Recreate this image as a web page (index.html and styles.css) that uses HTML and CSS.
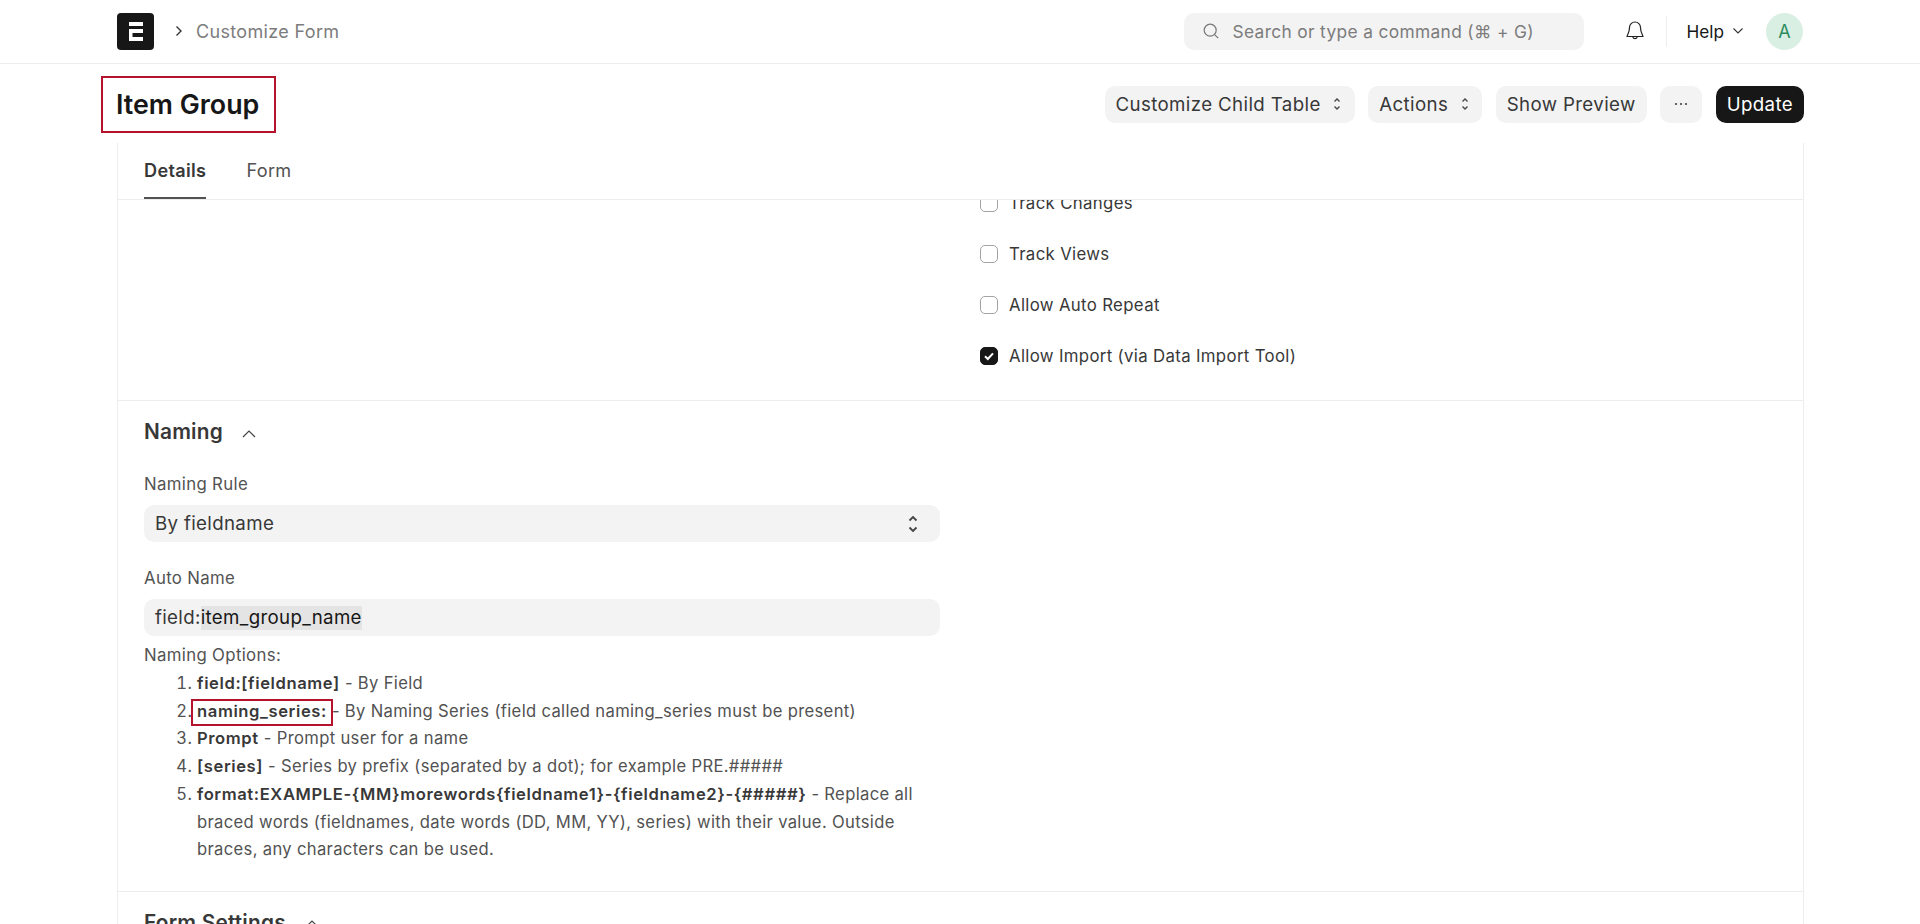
FILE: index.html
```html
<!DOCTYPE html>
<html lang="en">
<head>
<meta charset="utf-8">
<title>Customize Form</title>
<link rel="stylesheet" href="styles.css">
</head>
<body>
<header class="navbar">
  <div class="nav-left">
    <svg class="logo" viewBox="0 0 37 37" aria-hidden="true"><rect width="37" height="37" rx="4" fill="#171717"/><path d="M12 9h14v4H12zM12 16h14v4H15.500v4H26v4H12z" fill="#fff"/></svg>
    <svg class="crumb-chevron" viewBox="0 0 10 14" aria-hidden="true"><path d="M2.500 2.500 7 7l-4.500 4.500" fill="none" stroke="#333" stroke-width="1.400"/></svg>
    <span class="crumb">Customize Form</span>
  </div>
  <div class="nav-right">
    <div class="search">
      <svg class="search-icon" viewBox="0 0 18 18" aria-hidden="true"><circle cx="8.200" cy="8.200" r="6" fill="none" stroke="#777" stroke-width="1.200"/><path d="m12.600 12.600 3.600 3.600" stroke="#777" stroke-width="1.200" fill="none"/></svg>
      <span>Search or type a command (⌘ + G)</span>
    </div>
    <svg class="bell" viewBox="0 0 20 22" aria-hidden="true"><path d="M10 2a5.500 5.500 0 0 0-5.500 5.500c0 5-2 7-2.500 9h16c-.5-2-2.500-4-2.500-9A5.500 5.500 0 0 0 10 2Z" fill="none" stroke="#222" stroke-width="1.200" stroke-linejoin="round"/><path d="M7.800 17a2.300 2.300 0 0 0 4.400 0" fill="none" stroke="#222" stroke-width="1.200"/></svg>
    <div class="nav-divider"></div>
    <div class="help">Help
      <svg class="help-chevron" viewBox="0 0 12 8" aria-hidden="true"><path d="m1.500 1.500 4.500 4.500 4.500-4.500" fill="none" stroke="#333" stroke-width="1.100"/></svg>
    </div>
    <div class="avatar">A</div>
  </div>
</header>

<section class="page-head">
  <h1 class="title"><span class="marked">Item Group</span></h1>
  <div class="actions">
    <button class="btn">Customize Child Table
      <svg class="updown" viewBox="0 0 8 14" aria-hidden="true"><path d="m1.500 4.500 2.500-2.500 2.500 2.500M1.500 9.500l2.500 2.500 2.500-2.500" fill="none" stroke="#444" stroke-width="1.300"/></svg>
    </button>
    <button class="btn">Actions
      <svg class="updown" viewBox="0 0 8 14" aria-hidden="true"><path d="m1.500 4.500 2.500-2.500 2.500 2.500M1.500 9.500l2.500 2.500 2.500-2.500" fill="none" stroke="#444" stroke-width="1.300"/></svg>
    </button>
    <button class="btn">Show Preview</button>
    <button class="btn btn-more" aria-label="More">
      <svg class="dots" viewBox="0 0 14 4" aria-hidden="true"><circle cx="2" cy="2" r="1.100" fill="#444"/><circle cx="7" cy="2" r="1.100" fill="#444"/><circle cx="12" cy="2" r="1.100" fill="#444"/></svg>
    </button>
    <button class="btn btn-primary">Update</button>
  </div>
</section>

<main class="card">
  <nav class="tabs">
    <a class="tab tab-active">Details</a>
    <a class="tab">Form</a>
  </nav>
  <div class="viewport">
    <section class="section section-checks">
      <div class="col"></div>
      <div class="col checks">
        <label class="check"><span class="box"></span>Track Changes</label>
        <label class="check"><span class="box"></span>Track Views</label>
        <label class="check"><span class="box"></span>Allow Auto Repeat</label>
        <label class="check"><span class="box box-on"><svg viewBox="0 0 18 18" aria-hidden="true"><path d="m5 9.300 2.800 2.700L13 6.300" fill="none" stroke="#fff" stroke-width="2"/></svg></span>Allow Import (via Data Import Tool)</label>
      </div>
    </section>
    <section class="section section-naming">
      <h2 class="section-title">Naming
        <svg class="collapse" viewBox="0 0 16 10" aria-hidden="true"><path d="m2 8 6-6 6 6" fill="none" stroke="#444" stroke-width="1.200"/></svg>
      </h2>
      <div class="field-col">
        <div class="label">Naming Rule</div>
        <div class="control control-select">By fieldname
          <svg class="updown updown-lg" viewBox="0 0 10 18" aria-hidden="true"><path d="m1.500 5.500 3.500-3.500 3.500 3.500M1.500 12.500l3.500 3.500 3.500-3.500" fill="none" stroke="#444" stroke-width="1.800"/></svg>
        </div>
        <div class="label label-next">Auto Name</div>
        <div class="control">field:<span class="selected">item_group_name</span></div>
        <div class="help-text">Naming Options:</div>
        <ol class="options">
          <li><b>field:[fieldname]</b> - By Field</li>
          <li><b class="marked-small">naming_series:</b> - By Naming Series (field called naming_series must be present)</li>
          <li><b>Prompt</b> - Prompt user for a name</li>
          <li><b>[series]</b> - Series by prefix (separated by a dot); for example PRE.#####</li>
          <li><b>format:EXAMPLE-{MM}morewords{fieldname1}-{fieldname2}-{#####}</b> - Replace all braced words (fieldnames, date words (DD, MM, YY), series) with their value. Outside braces, any characters can be used.</li>
        </ol>
      </div>
    </section>
    <section class="section section-form">
      <h2 class="section-title">Form Settings
        <svg class="collapse" viewBox="0 0 16 10" aria-hidden="true"><path d="m2 8 6-6 6 6" fill="none" stroke="#444" stroke-width="1.200"/></svg>
      </h2>
    </section>
  </div>
</main>
</body>
</html>
```
FILE: styles.css
```css
* { box-sizing: border-box; }
html, body { height: 100%; }
body {
  margin: 0;
  height: 924px;
  overflow: hidden;
  display: flex;
  flex-direction: column;
  background: #fff;
  color: #383838;
  font-family: Inter, "Liberation Sans", sans-serif;
  font-size: 16.800px;
  letter-spacing: 0.02em;
}

.navbar {
  flex: none;
  height: 64px;
  padding: 0 117px 1px 117px;
  border-bottom: 1px solid #ededed;
  display: flex;
  align-items: center;
  justify-content: space-between;
}
.nav-left, .nav-right { display: flex; align-items: center; }
.logo { width: 37px; height: 37px; }
.crumb-chevron { width: 10px; height: 14px; margin-left: 20px; }
.crumb { margin-left: 12px; font-size: 18px; color: #7c7c7c; }

.search {
  width: 400px;
  height: 37px;
  border-radius: 10px;
  background: #f3f3f3;
  display: flex;
  align-items: center;
  padding-left: 18px;
  color: #7c7c7c;
  font-size: 17.350px;
}
.search-icon { width: 18px; height: 18px; margin-right: 13px; }
.bell { width: 20px; height: 22px; margin-left: 41px; }
.nav-divider { width: 1px; height: 31px; margin-left: 21px; background: #ededed; }
.help {
  margin-left: 20px;
  display: flex;
  align-items: center;
  gap: 8px;
  font-size: 17.200px;
  color: #171717;
  letter-spacing: 0;
}
.help-chevron { width: 12px; height: 8px; }
.avatar {
  width: 37px;
  height: 37px;
  margin-left: 22px;
  border-radius: 50%;
  background: #d9efe3;
  color: #2e8b5e;
  display: flex;
  align-items: center;
  justify-content: center;
  font-size: 18px;
  letter-spacing: 0;
}

.page-head {
  flex: none;
  height: 79px;
  padding: 1px 116px 0 116px;
  display: flex;
  align-items: center;
  justify-content: space-between;
}
.title { margin: 0; font-size: 26.800px; line-height: 32px; font-weight: 600; color: #171717; letter-spacing: 0; }
.marked { position: relative; display: inline-block; }
.marked::after {
  content: "";
  position: absolute;
  inset: -12px -17px -13px -15px;
  border: 2px solid #b5122e;
}
.actions { display: flex; align-items: center; gap: 13.500px; }
.btn {
  height: 37px;
  padding: 0 11px;
  border: 0;
  border-radius: 10px;
  background: #f3f3f3;
  color: #383838;
  display: flex;
  align-items: center;
  gap: 12.500px;
  font: inherit;
  font-size: 18.700px;
  letter-spacing: 0.02em;
}
.btn-more { width: 42px; justify-content: center; padding: 0; }
.btn-primary { background: #171717; color: #fff; }
.updown { width: 8px; height: 14px; margin-right: 2.500px; }
.dots { width: 14px; height: 4px; }

.card {
  flex: 1;
  min-height: 0;
  margin: 0 116px 0 117px;
  border-left: 1px solid #ededed;
  border-right: 1px solid #ededed;
  display: flex;
  flex-direction: column;
}
.tabs {
  flex: none;
  height: 57px;
  padding-left: 26px;
  border-bottom: 1px solid #ededed;
  display: flex;
  gap: 40px;
}
.tab {
  height: 56px;
  padding-top: 16px;
  font-size: 18.100px;
  line-height: 22px;
  color: #525252;
}
.tab-active { font-weight: 600; color: #383838; border-bottom: 2px solid #525252; margin-bottom: -1px; }
.viewport { flex: 1; min-height: 0; overflow: hidden; }

.section { border-bottom: 1px solid #ededed; padding: 0 26px; }
.section-checks {
  display: grid;
  grid-template-columns: 836px 1fr;
  margin-top: -23px;
  padding-bottom: 19px;
}
.check { height: 51px; display: flex; align-items: center; gap: 11px; color: #383838; }
.box {
  width: 18px;
  height: 18px;
  border: 1px solid #a3a3a3;
  border-radius: 5px;
  background: #fff;
  flex: none;
}
.box svg { display: block; width: 18px; height: 18px; }
.box-on { background: #171717; border-color: #171717; }
.box-on svg { margin: -1px; }

.section-naming { padding-top: 19px; padding-bottom: 27px; }
.section-title {
  margin: 0;
  height: 24px;
  font-size: 20.800px;
  line-height: 24px;
  font-weight: 600;
  color: #383838;
  letter-spacing: 0.01em;
  display: flex;
  align-items: center;
  gap: 18px;
}
.collapse { width: 16px; height: 10px; margin-top: 3px; }
.field-col { width: 796px; margin-top: 30px; }
.label { height: 20px; line-height: 20px; color: #525252; }
.label-next { margin-top: 26px; }
.control {
  height: 37px;
  margin-top: 11px;
  padding: 0 11px;
  border-radius: 10px;
  background: #f3f3f3;
  display: flex;
  align-items: center;
  justify-content: space-between;
  font-size: 18.700px;
  color: #383838;
}
.label-next + .control { justify-content: flex-start; }
.selected { background: #e4e4e4; color: #171717; line-height: 24px; }
.updown-lg { width: 10px; height: 18px; margin-right: 11px; }
.help-text { margin-top: 5px; height: 28px; line-height: 28px; color: #525252; }
.options {
  margin: 1px 0 0;
  padding-left: 53px;
  font-size: 16.600px;
  line-height: 27.700px;
  color: #525252;
}
.options b { font-weight: 600; color: #383838; letter-spacing: 0.036em; }
.marked-small { position: relative; display: inline-block; }
.marked-small::after {
  content: "";
  position: absolute;
  top: 1px;
  bottom: -1px;
  left: -6px;
  right: -6px;
  border: 2px solid #b5122e;
}
.section-form { padding-top: 19px; border-bottom: 0; }
```
